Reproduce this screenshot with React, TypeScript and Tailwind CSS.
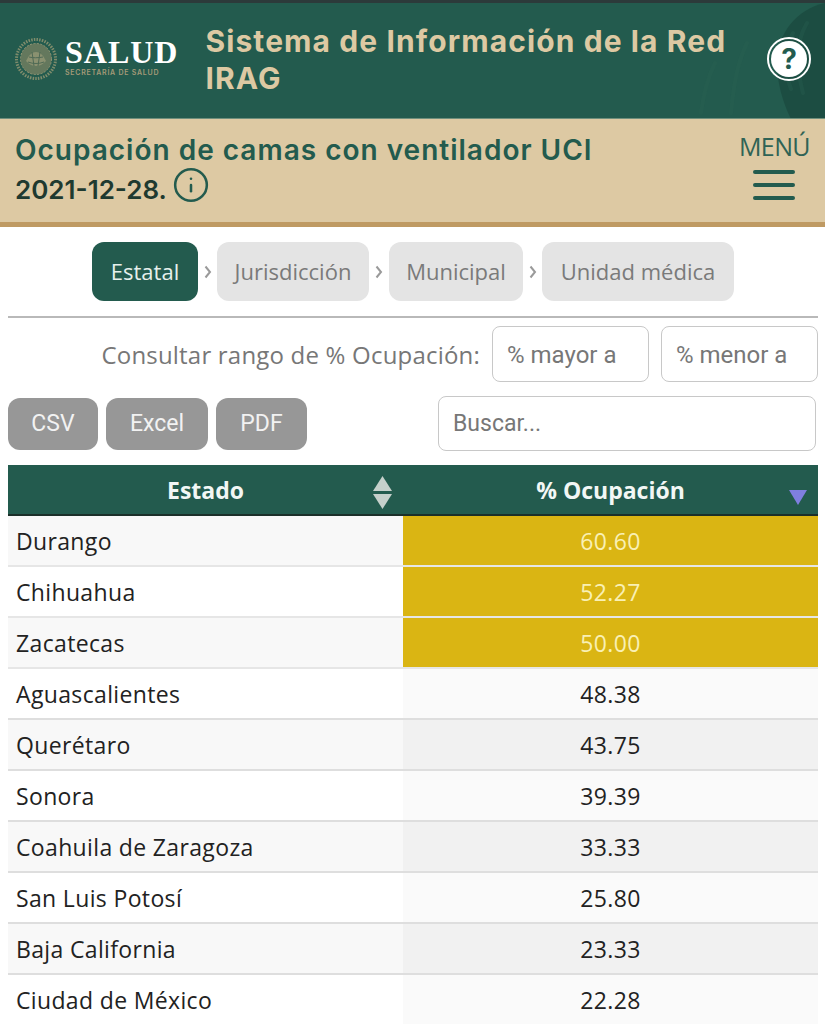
import { Info } from 'lucide-react'

const rows = [
  { estado: 'Durango', valor: '60.60', alto: true },
  { estado: 'Chihuahua', valor: '52.27', alto: true },
  { estado: 'Zacatecas', valor: '50.00', alto: true },
  { estado: 'Aguascalientes', valor: '48.38', alto: false },
  { estado: 'Querétaro', valor: '43.75', alto: false },
  { estado: 'Sonora', valor: '39.39', alto: false },
  { estado: 'Coahuila de Zaragoza', valor: '33.33', alto: false },
  { estado: 'San Luis Potosí', valor: '25.80', alto: false },
  { estado: 'Baja California', valor: '23.33', alto: false },
  { estado: 'Ciudad de México', valor: '22.28', alto: false },
]

const Emblem = () => (
  <svg width="44" height="44" viewBox="0 0 44 44" className="shrink-0">
    <circle cx="22" cy="22" r="19.5" fill="none" stroke="#7f8c6c" strokeWidth="3" strokeDasharray="1.5 1.2" />
    <circle cx="22" cy="22" r="15.5" fill="#64785d" />
    <circle cx="22" cy="22" r="15.5" fill="none" stroke="#8f9574" strokeWidth="1" strokeDasharray="2 1.5" />
    <path d="M12 24c3-6 6-9 10-9s7 3 10 9c-3 3-6 5-10 5s-7-2-10-5z" fill="#8a9170" />
    <path d="M15 20c4 1 9 1 14 0M14 25c5 2 11 2 16 0M18 15l2 14M26 15l-2 14" stroke="#4f6a55" strokeWidth="1" fill="none" />
  </svg>
)

const SortArrows = () => (
  <svg width="19" height="33" viewBox="0 0 19 33" className="absolute right-[11px] top-[9px]">
    <path d="M9.5 0l9.5 15H0z" fill="#c5d0cb" />
    <path d="M9.5 33L0 18h19z" fill="#c5d0cb" />
  </svg>
)

const Chevron = () => (
  <svg width="8" height="14" viewBox="0 0 8 14" fill="none" className="shrink-0">
    <path d="M1.5 1.5L6 7l-4.5 5.5" stroke="#9a9a9a" strokeWidth="2" />
  </svg>
)

const App = () => {
  return (
    <div className="w-[825px] h-[1024px] overflow-hidden bg-white font-['Open_Sans',sans-serif]">
      <div className="h-[3px] bg-[#2c3a3a]" />

      <header className="relative h-[116px] bg-[#235b4e] flex items-start border-b border-[#6f8f7c] overflow-hidden">
        <svg width="300" height="116" viewBox="0 0 300 116" className="absolute right-0 top-0" fill="none">
          <path d="M300 0c-28 6-48 30-48 60 0 20 6 40 14 56h34z" fill="#1c4d42" />
          <path d="M268 30c-8 14-10 34-2 56M282 20c-10 16-12 40-4 70M190 60c-8 16-12 34-14 50M222 40c-10 20-14 46-16 70" stroke="#2a6354" strokeWidth="4" strokeLinecap="round" opacity="0.3" />
        </svg>
        <div className="relative flex items-center ml-[14px] mt-[34px] gap-[7px]">
          <Emblem />
          <div className="flex flex-col pb-[3px]">
            <span className="font-['Liberation_Serif',serif] font-bold text-[32px] leading-[28px] tracking-[1px] text-white">SALUD</span>
            <span className="font-['Inter',sans-serif] font-semibold text-[7px] leading-[8px] mt-[3px] tracking-[0.75px] text-[#a39a78]">SECRETARÍA DE SALUD</span>
          </div>
        </div>
        <h1 className="relative ml-[27px] mt-[20px] w-[560px] font-['Inter',sans-serif] font-bold text-[30px] leading-[37px] tracking-[1.1px] text-[#ddc9a3]">
          Sistema de Información de la Red IRAG
        </h1>
        <div className="absolute right-[14px] top-[34px] w-[44px] h-[44px] rounded-full border-2 border-white flex items-center justify-center">
          <div className="w-[36px] h-[36px] rounded-full bg-white flex items-center justify-center font-['Inter',sans-serif] font-bold text-[28px] text-[#235b4e]">?</div>
        </div>
      </header>

      <section className="relative h-[103px] bg-[#ddc9a3] flex justify-between">
        <div className="pl-[15px] pt-[13px]">
          <h2 className="font-['Inter',sans-serif] font-semibold text-[28px] leading-[36px] tracking-[1px] text-[#235b4e]">
            Ocupación de camas con ventilador UCI
          </h2>
          <div className="flex items-start mt-[4px]">
            <span className="font-['Inter',sans-serif] font-semibold text-[26px] leading-[36px] text-[#1f3a30]">2021-12-28.</span>
            <Info size={38} strokeWidth={1.6} className="text-[#235b4e] ml-[5px] -mt-[6px]" />
          </div>
        </div>
        <div className="flex flex-col items-center pr-[15px] pt-[10px]">
          <span className="text-[25px] leading-[34px] text-[#2f6355] tracking-[-0.6px]">MENÚ</span>
          <div className="flex flex-col gap-[9px] mt-[7px]">
            <div className="w-[42px] h-[4px] rounded-full bg-[#235b4e]" />
            <div className="w-[42px] h-[4px] rounded-full bg-[#235b4e]" />
            <div className="w-[42px] h-[4px] rounded-full bg-[#235b4e]" />
          </div>
        </div>
      </section>
      <div className="h-[5px] bg-[#bf9a63]" />

      <main className="pl-[8px] pr-[7px]">
        <nav className="flex justify-center items-center pt-[15px] pb-[15px] border-b-2 border-[#b9b9b9]">
          <div className="w-[106px] h-[59px] flex items-center justify-center rounded-[12px] bg-[#235b4e] text-[#e6f0ec] text-[22px]">Estatal</div>
          <div className="w-[19px] flex justify-center"><Chevron /></div>
          <div className="w-[152px] h-[59px] flex items-center justify-center rounded-[12px] bg-[#e4e4e4] text-[#7a7a7a] text-[22px]">Jurisdicción</div>
          <div className="w-[20px] flex justify-center"><Chevron /></div>
          <div className="w-[134px] h-[59px] flex items-center justify-center rounded-[12px] bg-[#e4e4e4] text-[#7a7a7a] text-[22px]">Municipal</div>
          <div className="w-[19px] flex justify-center"><Chevron /></div>
          <div className="w-[192px] h-[59px] flex items-center justify-center rounded-[12px] bg-[#e4e4e4] text-[#7a7a7a] text-[22px]">Unidad médica</div>
        </nav>

        <div className="flex justify-end items-center gap-[12px] mt-[8px]">
          <span className="pt-[2px] text-[24px] tracking-[0.2px] text-[#777777]">Consultar rango de % Ocupación:</span>
          <div className="w-[157px] h-[56px] pl-[14px] pt-[1px] flex items-center rounded-[8px] border border-[#c8c8c8] font-['Roboto',sans-serif] text-[24px] text-[#777777]">% mayor a</div>
          <div className="w-[157px] h-[56px] pl-[14px] pt-[1px] flex items-center rounded-[8px] border border-[#c8c8c8] font-['Roboto',sans-serif] text-[24px] text-[#777777]">% menor a</div>
        </div>

        <div className="flex justify-between items-center mt-[14px]">
          <div className="flex gap-[8px] font-['Roboto',sans-serif] text-[23px] text-[#f2f2f2]">
            <div className="w-[90px] h-[52px] pt-[2px] flex items-center justify-center rounded-[12px] bg-[#979797]">CSV</div>
            <div className="w-[102px] h-[52px] pt-[2px] flex items-center justify-center rounded-[12px] bg-[#979797]">Excel</div>
            <div className="w-[91px] h-[52px] pt-[2px] flex items-center justify-center rounded-[12px] bg-[#979797]">PDF</div>
          </div>
          <div className="w-[378px] h-[55px] mr-[2px] pl-[14px] pt-[2px] flex items-center rounded-[8px] border border-[#c8c8c8] font-['Roboto',sans-serif] text-[23px] text-[#777777]">Buscar...</div>
        </div>

        <div className="mt-[14px]">
          <div className="flex h-[51px] pt-[2px] bg-[#235b4e] border-b-2 border-[#1b2f29] text-[#f2f7f5] text-[23px] font-bold">
            <div className="relative w-[395px] flex items-center justify-center">
              Estado
              <SortArrows />
            </div>
            <div className="relative flex-1 flex items-center justify-center">
              % Ocupación
              <svg width="18" height="15" viewBox="0 0 18 15" className="absolute right-[11px] top-[23px]">
                <path d="M9 15L0 0h18z" fill="#7f7fe0" />
              </svg>
            </div>
          </div>
          {rows.map((row, i) => (
            <div key={row.estado} className={`flex h-[51px] text-[23px] tracking-[0.35px] border-b-2 ${row.alto ? 'border-[#e6e6e6]' : 'border-[#dedede]'} ${i % 2 === 0 ? 'bg-[#f8f8f8]' : 'bg-white'}`}>
              <div className="w-[395px] pl-[8px] pt-[2px] flex items-center text-[#222222]">{row.estado}</div>
              {row.alto ? (
                <div className="flex-1 pt-[2px] flex items-center justify-center bg-[#dab513] text-[#f9f0b4]">{row.valor}</div>
              ) : (
                <div className={`flex-1 pt-[2px] flex items-center justify-center text-[#222222] ${i % 2 === 1 ? 'bg-[#fafafa]' : 'bg-[#f1f1f1]'}`}>{row.valor}</div>
              )}
            </div>
          ))}
        </div>
      </main>
    </div>
  )
}

export default App
